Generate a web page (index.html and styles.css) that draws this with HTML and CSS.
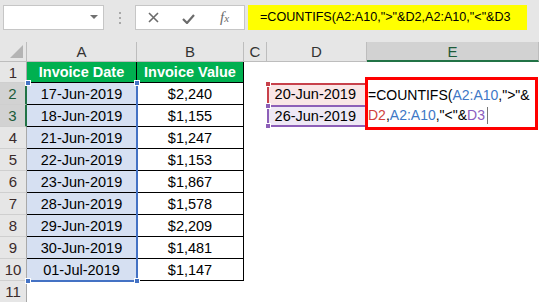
FILE: index.html
```html
<!DOCTYPE html>
<html lang="en">
<head>
    <meta charset="UTF-8">
    <title>COUNTIFS between dates</title>
    <link rel="stylesheet" href="styles.css">
</head>
<body>
    <div class="toolbar">
        <div class="namebox"><span class="caret"></span></div>
        <div class="grip"><i></i><i></i><i></i></div>
        <div class="fxbox">
            <svg class="ico-x" width="11" height="11" viewBox="0 0 11 11"><path d="M1 1L10 10M10 1L1 10" stroke="#6b6b6b" stroke-width="1.6"/></svg>
            <svg class="ico-ok" width="13" height="10" viewBox="0 0 13 10"><path d="M1 5L5 9L12 1" fill="none" stroke="#6b6b6b" stroke-width="2.2"/></svg>
            <span class="fx">f<small>x</small></span>
        </div>
        <div class="formula">=COUNTIFS(A2:A10,"&gt;"&amp;D2,A2:A10,"&lt;"&amp;D3</div>
    </div>

    <div class="sheet">
        <div class="ch corner"><span class="tri"></span></div>
        <div class="ch">A</div>
        <div class="ch">B</div>
        <div class="ch">C</div>
        <div class="ch">D</div>
        <div class="ch on">E</div>

        <div class="rh">1</div>
        <div class="c hd">Invoice Date</div>
        <div class="c hd">Invoice Value</div>
        <div></div><div></div><div></div>

        <div class="rh on">2</div>
        <div class="c dt">17-Jun-2019</div>
        <div class="c">$2,240</div>
        <div></div>
        <div class="dd red">20-Jun-2019</div>
        <div></div>

        <div class="rh on">3</div>
        <div class="c dt">18-Jun-2019</div>
        <div class="c">$1,155</div>
        <div></div>
        <div class="dd purple">26-Jun-2019</div>
        <div></div>

        <div class="rh">4</div>
        <div class="c dt">21-Jun-2019</div>
        <div class="c">$1,247</div>
        <div></div><div></div><div></div>

        <div class="rh">5</div>
        <div class="c dt">22-Jun-2019</div>
        <div class="c">$1,153</div>
        <div></div><div></div><div></div>

        <div class="rh">6</div>
        <div class="c dt">23-Jun-2019</div>
        <div class="c">$1,867</div>
        <div></div><div></div><div></div>

        <div class="rh">7</div>
        <div class="c dt">28-Jun-2019</div>
        <div class="c">$1,578</div>
        <div></div><div></div><div></div>

        <div class="rh">8</div>
        <div class="c dt">29-Jun-2019</div>
        <div class="c">$2,209</div>
        <div></div><div></div><div></div>

        <div class="rh">9</div>
        <div class="c dt">30-Jun-2019</div>
        <div class="c">$1,481</div>
        <div></div><div></div><div></div>

        <div class="rh">10</div>
        <div class="c dt">01-Jul-2019</div>
        <div class="c">$1,147</div>
        <div></div><div></div><div></div>

        <div class="rh">11</div>
        <div></div><div></div><div></div><div></div><div></div>

        <!-- overlays -->
        <div class="sel">
            <span class="h tl"></span><span class="h tr"></span>
            <span class="h bl"></span><span class="h br"></span>
        </div>
        <div class="rng rng-red"><span class="h tl"></span></div>
        <div class="rng rng-purple"><span class="h tl"></span><span class="h bl"></span></div>
        <div class="editor">=COUNTIFS(<span class="r-blue">A2:A10</span>,"&gt;"&amp;<br><span class="r-red">D2</span>,<span class="r-blue">A2:A10</span>,"&lt;"&amp;<span class="r-purple">D3</span><span class="cursor"></span></div>
    </div>
</body>
</html>
```

FILE: styles.css
```css
* {margin: 0; padding: 0; box-sizing: border-box;}
body {
width: 539px;
height: 302px;
overflow: hidden;
background: #fff;
font-family: "Liberation Sans", Arial, sans-serif;
color: #000;
}

/* formula bar */
.toolbar {
height: 42px;
background: #e6e6e6;
display: flex;
align-items: flex-start;
padding: 5px 0 0 3px;
}
.namebox {
width: 101px;
height: 25px;
background: #fff;
border: 1px solid #c6c6c6;
display: flex;
justify-content: flex-end;
align-items: center;
padding-right: 5px;
}
.caret {
border-left: 4px solid transparent;
border-right: 4px solid transparent;
border-top: 4px solid #707070;
margin-top: -2px;
}
.grip {
display: flex;
flex-direction: column;
gap: 3px;
margin: 7px 14px 0 15px;
}
.grip i {width: 2px; height: 2px; background: #a8a8a8;}
.fxbox {
width: 110px;
height: 25px;
background: #fff;
border: 1px solid #c6c6c6;
display: flex;
align-items: center;
padding-left: 12px;
}
.ico-ok {margin-left: 23px; margin-top: 2px;}
.fx {
margin-left: 25px;
font: italic 15px "Liberation Serif", serif;
color: #6b6b6b;
}
.fx small {font-size: 11px;}
.formula {
width: 279px;
height: 25px;
margin-left: 3px;
background: #ffff00;
padding-left: 12px;
font-size: 12.6px;
line-height: 25px;
white-space: nowrap;
}

/* grid */
.sheet {
position: relative;
display: grid;
grid-template-columns: 27px 110px 107px 23px 100px 172px;
grid-template-rows: 20px 21px repeat(9, 22px) 22px;
font-size: 14.5px;
}
.ch {
background: #e6e6e6;
border-right: 1px solid #bdbdbd;
border-bottom: 1px solid #bdbdbd;
display: flex;
align-items: center;
justify-content: center;
font-size: 15px;
color: #333;
}
.ch.on {
background: #d2d2d2;
border-bottom: 2px solid #217346;
color: #1d5b3a;
}
.corner {position: relative;}
.tri {
position: absolute;
right: 3px;
bottom: 3px;
border-left: 13px solid transparent;
border-bottom: 13px solid #b4b4b4;
}
.rh {
background: #e6e6e6;
border-right: 1px solid #a9a9a9;
border-bottom: 1px solid #cfcfcf;
display: flex;
align-items: center;
justify-content: center;
font-size: 15px;
color: #3a2a2a;
}
.rh.on {
background: #d2d2d2;
border-right: 2px solid #217346;
color: #1d5b3a;
}
.c {
border-right: 1px solid #000;
border-bottom: 1px solid #000;
display: flex;
align-items: center;
justify-content: center;
white-space: nowrap;
}
.c.hd {background: #00b050; color: #fff; font-weight: bold;}
.c.dt {background: #d6e0f2;}
.dd {
display: flex;
align-items: center;
justify-content: flex-end;
padding-right: 11px;
white-space: nowrap;
}
.dd.red {background: #f9e6e6;}
.dd.purple {background: #eee8f5;}

/* reference outlines */
.sel {
position: absolute;
grid-column: 2 / 3;
grid-row: 3 / 12;
top: 0;
left: 1px;
right: -1px;
bottom: -1px;
border-right: 2px solid #4472c4;
border-bottom: 2px solid #4472c4;
}
.h {
position: absolute;
width: 6px;
height: 6px;
background: #4472c4;
border: 1px solid #fff;
}
.sel .tl {left: -3px; top: -3px;}
.sel .tr {right: -4px; top: -3px;}
.sel .bl {left: -3px; bottom: -4px;}
.sel .br {right: -4px; bottom: -4px;}
.rng {
position: absolute;
grid-column: 5 / 6;
top: 0;
left: 0;
right: 0;
bottom: 0;
}
.rng-red {grid-row: 3 / 4; border-top: 2px solid #c8414b; border-left: 2px solid #c8414b;}
.rng-red .h {background: #c8414b;}
.rng-purple {grid-row: 4 / 5; border-top: 2px solid #8d5fb8; border-left: 2px solid #8d5fb8; border-bottom: 2px solid #8d5fb8;}
.rng-purple .h {background: #8d5fb8;}
.rng .tl {left: -4px; top: -4px;}
.rng .bl {left: -4px; bottom: -4px;}
.editor {
position: absolute;
grid-column: 6 / 7;
grid-row: 3 / 5;
top: -6px;
left: -2px;
right: 1px;
bottom: -3px;
background: #fff;
border: 3px solid #ff0000;
padding: 5px 0 0 0;
font-size: 14px;
line-height: 20px;
white-space: nowrap;
}
.r-blue {color: #3e78c6;}
.r-red {color: #d0403e;}
.r-purple {color: #8a5cc0;}
.cursor {
display: inline-block;
width: 1px;
height: 17px;
background: #777;
margin-left: 2px;
vertical-align: -4px;
}
```
